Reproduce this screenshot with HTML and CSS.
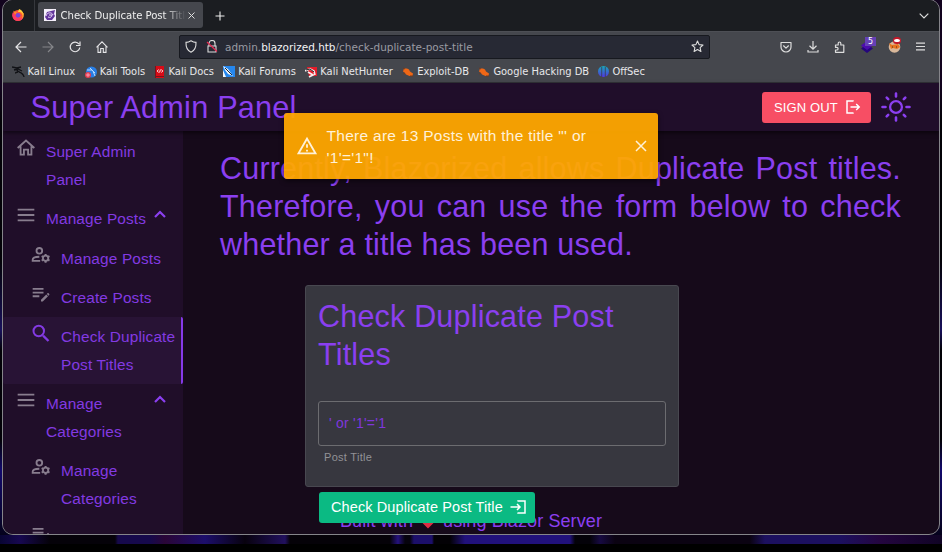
FILE: index.html
```html
<!DOCTYPE html>
<html lang="en">
<head>
<meta charset="utf-8">
<title>Check Duplicate Post Titles</title>
<link rel="stylesheet" href="styles.css">
</head>
<body>
<svg width="0" height="0" class="defs">
  <symbol id="bars" viewBox="0 0 24 24"><path d="M2 5.5h20M2 12h20M2 18.5h20" fill="none" stroke="currentColor" stroke-width="2.200"/></symbol>
  <symbol id="up" viewBox="0 0 24 24"><path d="m6 14.500 6-6 6 6" fill="none" stroke="currentColor" stroke-width="2.600"/></symbol>
  <symbol id="manage" viewBox="0 0 24 24"><g fill="none" stroke="currentColor" stroke-width="2.200"><circle cx="10" cy="7" r="3.400"/><path d="M11 19H2v-1.200c0-2 3.500-3.600 8-3.700"/><circle cx="17.500" cy="16" r="3.200"/></g><path d="M17.500 10.700v2.500M17.500 18.800v2.500M12.800 13.300l2.300 1.300M19.900 17.400l2.300 1.300M12.800 18.700l2.300-1.300M19.900 14.600l2.300-1.300" stroke="currentColor" stroke-width="2.400"/></symbol>
  <symbol id="note" viewBox="0 0 24 24"><path d="M2 9.200h13v2.200H2zm0-2.200h13V4.800H2zm0 8.800h8v-2.200H2zm17.010-3.930.71-.71c.39-.39 1.020-.39 1.410 0l.71.71c.39.39.39 1.020 0 1.410l-.71.71-2.120-2.120zm-.71.71-6.300 6.300V21h2.120l6.300-6.300-2.120-2.120z" fill="currentColor"/></symbol>
  <symbol id="bug" viewBox="0 0 12 10"><path d="M2 1.500h3l2 1 1 2 3 2-.5 2.500H7.500L4 7.500 3 6 1 4.500z" fill="#ef6716"/><path d="M1 1l2 1M1 7l2-1M11 9l-3 0" stroke="#71391f"/></symbol>
</svg>

<div class="window">
  <div class="tabstrip">
    <div class="pinned">
      <svg width="12" height="12" viewBox="0 0 12 12"><circle cx="6" cy="6.500" r="5.500" fill="#ff5535"/><path d="M7 0c3 1 5 4 4.700 7C11 3.500 8 3 6 3z" fill="#ffce3c"/><path d="M1 3C0 5-.200 8 2 10.500 5 13 10 12 11.300 8 9 10 4 10 3 6z" fill="#ff3768"/><path d="M8 3c3 2 3.500 5 1 7.500L11.500 8V4z" fill="#ffb52e"/><circle cx="6" cy="6.300" r="2.400" fill="#7c43dc"/><path d="M1 1.500L3 3l2 .5-2 2z" fill="#ff8b2b"/></svg>
    </div>
    <div class="tab">
      <svg width="12" height="12" viewBox="0 0 12 12"><path fill="#f4effa" d="M0 0h12v12H0z"/><path d="M3 3l8-2-1 4 1 2-3 4-5 0-2-3z" fill="#62359c"/><path d="M2 7c1-4 6-4 7-1M4 8c2 1 4 0 4-2H5" fill="none" stroke="#eadcf8" stroke-width="1"/></svg>
      <span class="tab-title">Check Duplicate Post Titles</span>
      <svg width="7" height="7" viewBox="0 0 7 7"><path d="M.5.5l6 6m0-6l-6 6" stroke="#ddd"/></svg>
    </div>
    <svg class="plus" width="10" height="10" viewBox="0 0 10 10"><path d="M5 .5v9M.5 5h9" stroke="#eee" stroke-width="1.100"/></svg>
    <svg class="tab-list" width="10" height="6" viewBox="0 0 10 6"><path d="M.7.7L5 5 9.300.7" fill="none" stroke="#ddd" stroke-width="1.200"/></svg>
  </div>

  <div class="toolbar">
    <div class="nav">
      <svg width="12" height="12" viewBox="0 0 12 12"><path d="M11.500 6H1m5-5L1 6l5 5" fill="none" stroke="#e6e6e8" stroke-width="1.200"/></svg>
      <svg width="12" height="12" viewBox="0 0 12 12"><path d="M.5 6H11M6 1l5 5-5 5" fill="none" stroke="#85868a" stroke-width="1.200"/></svg>
      <svg width="12" height="12" viewBox="0 0 12 12"><path d="M10 3.200A4.800 4.800 0 1 0 10.800 6.500M11 .5v4H7" fill="none" stroke="#e6e6e8" stroke-width="1.200"/></svg>
      <svg width="12" height="12" viewBox="0 0 12 12"><path d="M.5 6.300L6 .8l5.500 5.500M2 5v6.400h2.700V7.500h2.600v3.900H10V5" fill="none" stroke="#e6e6e8" stroke-width="1.100"/></svg>
    </div>
    <div class="urlbar">
      <svg width="12" height="13" viewBox="0 0 12 13"><path d="M6 .8c2 1.300 3.500 1.600 5 1.600C11.200 7 9.500 10.500 6 12.200 2.500 10.500.8 7 1 2.400 2.500 2.400 4 2.100 6 .8z" fill="none" stroke="#ddd" stroke-width="1.100"/></svg>
      <svg class="lock" width="12" height="13" viewBox="0 0 12 13"><path d="M3 6V3.500a3 3 0 0 1 6 0V6M2 6h8v6H2z" fill="none" stroke="#ddd" stroke-width="1.100"/><path d="M1 2l10 9.500" stroke="#e22850" stroke-width="1.300"/></svg>
      <span class="url">admin.<b>blazorized.htb</b>/check-duplicate-post-title</span>
      <svg class="star" width="13" height="13" viewBox="0 0 13 13"><path d="M6.500 1l1.600 3.600 3.900.4-2.900 2.600.8 3.900-3.400-2-3.400 2 .8-3.900L1 5l3.900-.4z" fill="none" stroke="#ddd" stroke-width="1.100" stroke-linejoin="round"/></svg>
    </div>
    <div class="addons">
      <svg width="12" height="12" viewBox="0 0 12 12"><path d="M1 1.500h10V6a5 5 0 0 1-10 0zM3.300 4.500L6 7.200l2.700-2.700" fill="none" stroke="#ddd" stroke-width="1.200" stroke-linejoin="round"/></svg>
      <svg width="12" height="12" viewBox="0 0 12 12"><path d="M6 0v8M2.500 4.800L6 8.200l3.500-3.400M1 9v2h10V9" fill="none" stroke="#ddd" stroke-width="1.200"/></svg>
      <svg width="12" height="12" viewBox="0 0 12 12"><path d="M1.500 4h2.700V2.300a1.300 1.300 0 0 1 2.600 0V4h3v7.300H1.500V9h1.300a1.200 1.200 0 0 0 0-2.600H1.500z" fill="none" stroke="#ddd" stroke-width="1.200" stroke-linejoin="round"/></svg>
      <span class="layers"><svg width="12" height="12" viewBox="0 0 12 12"><path d="M6 3l6 4.500L6 12 0 7.500z" fill="#25067c"/><path d="M6 0l6 4.500L6 9 0 4.500z" fill="#4c0cae"/></svg><span class="count">5</span></span>
      <span class="fox"><svg width="13" height="13" viewBox="0 0 13 13"><circle cx="6.500" cy="7" r="5.800" fill="#d8b79a"/><path d="M1 3l3 2 6-1 2 3-3 2-4-1-2 1z" fill="#e87320"/><path d="M4 7h1M8 7h1" stroke="#432"/></svg><span class="blocked"></span></span>
      <svg width="9" height="9" viewBox="0 0 9 9"><path d="M0 1.200h9M0 4.500h9M0 7.800h9" stroke="#ddd" stroke-width="1.200"/></svg>
    </div>
  </div>

  <div class="bookmarks">
    <span class="bm"><svg width="13" height="12" viewBox="0 0 13 12"><path d="M0 1l5 1 4-1M2 4l4-1 4 2M5 3c-1 4 6 2 7 8M6 6c-2 0-2 1-3 1" fill="none" stroke="#111216" stroke-width="1.300"/></svg>Kali Linux</span>
    <span class="bm"><svg width="12" height="12" viewBox="0 0 12 12"><circle cx="6.500" cy="6" r="5.500" fill="#287ee5"/><path d="M2 4l5 0 3 3M5 2l3 3 2 5" fill="none" stroke="#b9dcff"/><circle cx="3" cy="9" r="3" fill="#e53f50"/><path d="M2 8h2v2H2z" fill="none" stroke="#fbd" stroke-width=".7"/></svg>Kali Tools</span>
    <span class="bm"><svg width="11" height="12" viewBox="0 0 11 12"><path fill="#d70b17" d="M1 0h9v12H1z"/><path fill="#78131a" d="M1 0h1v12H1zM1 10h9v1H1z"/><path d="M4.500 3.500L3.300 5l1.200 1.500M7.500 3.500L8.700 5 7.500 6.500M6.400 3.500l-.8 3" fill="none" stroke="#fff" stroke-width=".9"/></svg>Kali Docs</span>
    <span class="bm"><svg width="12" height="11" viewBox="0 0 12 11"><path fill="#2587ee" d="M0 0h12v11H0z"/><path d="M0 0l5 3 5 7-5-2-3-4zM0 4l3 7H0z" fill="#f2f6fa"/><path d="M2 2l7 7" stroke="#152535"/></svg>Kali Forums</span>
    <span class="bm"><svg width="12" height="12" viewBox="0 0 12 12"><path fill="#e51c29" d="M2 1h10v9H4z"/><path d="M0 5l5-2 4 2 1 4M3 6l5 3-4 2" fill="none" stroke="#f3eded" stroke-width="1.700"/><path d="M1 4l4-1 4 3" fill="none" stroke="#222"/></svg>Kali NetHunter</span>
    <span class="bm"><svg width="12" height="10"><use href="#bug"/></svg>Exploit-DB</span>
    <span class="bm"><svg width="12" height="10"><use href="#bug"/></svg>Google Hacking DB</span>
    <span class="bm"><svg width="11" height="11" viewBox="0 0 11 11"><defs><linearGradient id="os" x2="0" y2="1"><stop stop-color="#18a7b8"/><stop offset="1" stop-color="#5137e1"/></linearGradient></defs><circle cx="5.500" cy="5.500" r="5.500" fill="url(#os)"/><path d="M3.700 1v10M7.300 1v10" stroke="#393c4c" stroke-width=".8"/></svg>OffSec</span>
  </div>

  <div class="page">
    <header class="appbar">
      <h1>Super Admin Panel</h1>
      <button class="signout">SIGN OUT
        <svg width="15" height="14" viewBox="0 0 15 14"><path d="M7 1.600V1H1v12h6v-.6M4.500 7H13M10.200 4l3 3-3 3" fill="none" stroke="#fff" stroke-width="1.500"/></svg>
      </button>
      <svg class="sun" width="30" height="30" viewBox="0 0 30 30"><g fill="none" stroke="#8b3ff0" stroke-width="2.600" stroke-linecap="round"><circle cx="15" cy="15" r="5.900" stroke-width="2.300"/><path d="M15 1.500v3M15 25.500v3M1.500 15h3M25.500 15h3M5.700 5.700l1.500 1.500M22.800 22.800l1.500 1.500M5.700 24.300l1.500-1.500M22.800 7.200l1.500-1.500"/></g></svg>
    </header>

    <div class="content">
      <nav class="drawer">
        <a class="item home"><svg width="22" height="22" viewBox="0 0 24 24"><path d="M2 12L12 3l10 9M5.500 10v10h4v-6h5v6h4V10" fill="none" stroke="currentColor" stroke-width="2.200"/></svg><span>Super Admin Panel</span></a>
        <a class="item"><svg width="20" height="20"><use href="#bars"/></svg><span>Manage Posts</span><svg class="chev" width="20" height="20"><use href="#up"/></svg></a>
        <a class="item sub"><svg width="20" height="20"><use href="#manage"/></svg><span>Manage Posts</span></a>
        <a class="item sub"><svg width="20" height="20"><use href="#note"/></svg><span>Create Posts</span></a>
        <a class="item sub active"><svg width="21" height="21" viewBox="0 0 24 24"><path d="M14.500 14.500L21 21" stroke="currentColor" stroke-width="2.800"/><circle cx="9.300" cy="9" r="6.300" fill="none" stroke="currentColor" stroke-width="2.400"/></svg><span>Check Duplicate Post Titles</span></a>
        <a class="item"><svg width="20" height="20"><use href="#bars"/></svg><span>Manage Categories</span><svg class="chev" width="20" height="20"><use href="#up"/></svg></a>
        <a class="item sub"><svg width="20" height="20"><use href="#manage"/></svg><span>Manage Categories</span></a>
        <a class="item sub"><svg width="20" height="20"><use href="#note"/></svg><span></span></a>
      </nav>

      <main>
        <p class="intro">Currently, Blazorized allows Duplicate Post titles. Therefore, you can use the form below to check whether a title has been used.</p>
        <section class="card">
          <h2>Check Duplicate Post Titles</h2>
          <div class="field">' or '1'='1</div>
          <div class="helper">Post Title</div>
        </section>
        <button class="check">Check Duplicate Post Title
          <svg width="16" height="14" viewBox="0 0 16 14"><path d="M8 1.600V1h7v12H8v-.6M.5 7H10M7 4l3 3-3 3" fill="none" stroke="#fff" stroke-width="1.500"/></svg>
        </button>
        <footer>Built with <svg width="16" height="15" viewBox="0 0 16 15"><path d="M8 14.500L1.500 8C-3 1 6-2 8 3c2-5 11-2 6.500 5z" fill="#dd2e44"/></svg> using Blazor Server</footer>
      </main>
    </div>

    <div class="toast">
      <svg width="22" height="22" viewBox="0 0 24 24"><path d="M12 5.990 19.530 19H4.470L12 5.990M12 2 1 21h22L12 2zm1 14h-2v2h2v-2zm0-6h-2v4h2v-4z" fill="currentColor"/></svg>
      <span>There are 13 Posts with the title "' or '1'='1"!</span>
      <svg class="close" width="12" height="12" viewBox="0 0 12 12"><path d="M1 1l10 10M11 1L1 11" stroke="currentColor" stroke-width="1.500"/></svg>
    </div>
  </div>
</div>
<div class="wallpaper"></div>
</body>
</html>
```

FILE: styles.css
```css
* { box-sizing: border-box; }
body { margin: 0; height: 552px; overflow: hidden; font-family: "Liberation Sans", Arial, sans-serif; background: linear-gradient(#12031e 0 85px, #030207 120px 260px, #18105a 330px, #020107 350px 440px, #12096c 470px, #05021c 535px, #000 544px); }
svg { display: block; flex: none; }
.defs { position: absolute; }
h1, h2, p { margin: 0; font-weight: 400; }
button { border: 0; font-family: inherit; color: #fff; display: flex; align-items: center; white-space: nowrap; }

.window { height: 536px; margin: -1px 2px 0; border: 1px solid #85858a; border-radius: 11px; overflow: hidden; background: #160a1a; position: relative; }
.wallpaper { height: 17px; background: linear-gradient(transparent 9px, #000 9px), linear-gradient(90deg, #090533 0, #170850 20px, #050209 50px 115px, #16094b 118px 150px, #2a0637 165px, #1c0e6b 205px, #08020e 245px, #21105e 285px, #050208 290px 390px, #25127d 398px, #06030d 405px 410px, #1c0f6a 414px 432px, #030105 434px 450px, #21117b 465px 570px, #040209 575px 590px, #170a42 600px, #0b0312 615px 750px, #1c105f 765px 840px, #240640 880px, #100425 942px); }

.tabstrip { height: 31px; background: #1b1d21; display: flex; align-items: center; font: 10.150px "DejaVu Sans", sans-serif; color: #eee; }
.pinned { width: 32px; height: 31px; border-right: 1px solid #36383d; padding: 9px 0 0 9px; }
.tab { width: 165px; height: 26px; margin: -1px 0 0 3px; border-radius: 3px; background: #45474d; display: flex; align-items: center; padding: 0 8px 0 6px; }
.tab-title { flex: 1; margin: 0 2px 0 4.500px; overflow: hidden; white-space: nowrap; letter-spacing: -.05px; -webkit-mask-image: linear-gradient(90deg, #000 82%, transparent); mask-image: linear-gradient(90deg, #000 82%, transparent); }
.plus { margin-left: 12px; }
.tab-list { margin: 0 10px 0 auto; }

.toolbar { height: 31px; background: #45474d; display: flex; align-items: center; border-top: 1px solid #4d4f55; }
.nav { display: flex; gap: 15px; width: 176px; padding-left: 12px; }
.urlbar { width: 531px; height: 24px; background: #272934; border: 1px solid #17191f; border-radius: 2px; display: flex; align-items: center; padding: 0 5px; margin-top: -1px; }
.lock { margin-left: 9px; }
.url { font: 10.470px "DejaVu Sans", sans-serif; color: #9a9ba3; margin-left: 7px; white-space: nowrap; }
.url b { font-weight: 400; color: #f4f4f5; }
.star { margin-left: auto; }
.addons { display: flex; align-items: center; gap: 15px; margin: -1px 0 0 70px; }
.layers, .fox { position: relative; }
.count { position: absolute; left: 4px; top: -4px; width: 11px; height: 9px; background: #6540b6; color: #fff; font: 8px/9px "DejaVu Sans", sans-serif; text-align: center; }
.blocked { position: absolute; left: 5px; top: -3px; width: 8px; height: 7px; border-radius: 4px; border: solid #c31829; border-width: 2.5px 1px; background: #fff; }

.bookmarks { height: 21px; background: #45474d; display: flex; gap: 9.400px; align-items: center; font: 9.920px "DejaVu Sans", sans-serif; color: #e8e8ea; white-space: nowrap; border-bottom: 1px solid #303137; padding: 0 0 1px 8.500px; }
.bm { display: flex; align-items: center; gap: 3px; height: 20px; }

.page { height: 451px; position: relative; color: #8b3ff0; }
.appbar { height: 48px; background: #200e2a; display: flex; align-items: center; padding: 0 28px 0 27.500px; box-shadow: 0 2px 4px #0008; position: relative; z-index: 1; }
h1, h2, .intro { font-size: 30.500px; line-height: 38px; letter-spacing: .2px; }
h1 { font-size: 30.700px; padding-top: 2px; }
.signout { margin-left: auto; width: 109px; height: 31px; border-radius: 3px; background: #f74e64; font-size: 13px; letter-spacing: .12px; padding: 0 0 0 12px; gap: 8px; }
.sun { margin-left: 10px; }

.content { display: flex; height: 403px; }
.drawer { width: 180px; flex: none; background: #200e29; padding-top: 1px; overflow: hidden; }
.item { display: flex; align-items: flex-start; padding: 6px 0 6px 13px; font-size: 15.400px; line-height: 27.500px; letter-spacing: .145px; color: #833ae2; }
.item > svg { color: #887d8e; width: 20px; margin-top: 0; }
.item > span { margin-left: 10px; width: 105px; }
.item .chev { color: #8b3ff0; margin-left: -1px; }
.home > svg { margin-top: -1px; }
.sub { padding-left: 28px; }
.sub > span { width: 119px; margin-left: 10px; }
.active { background: #281335; border-right: 2px solid #8639e8; border-radius: 2px; margin-top: -.5px; }
.active > svg { color: #833ae2; }

main { flex: 1; position: relative; padding: 18px 38px 0 37px; }
.intro { text-align: justify; }
.card { width: 374px; height: 202px; margin: 22px 0 0 85px; padding: 11px 12px; border: 1px solid #484850; border-radius: 3px; background: #37373f; }
.field { height: 45px; margin-top: 28px; border: 1px solid #6c6c70; border-radius: 3px; padding: 0 10px; font-size: 14px; line-height: 43px; letter-spacing: .23px; color: #7f36dc; }
.helper { font-size: 11px; line-height: 14px; letter-spacing: .3px; color: #929296; margin: 4px 0 0 6px; }
.check { position: relative; z-index: 1; width: 216px; height: 31px; margin: 5px 0 0 99px; padding: 0 0 1px 12px; gap: 7px; border-radius: 3px; background: #0bba83; font-size: 14.500px; letter-spacing: .1px; }
footer { position: absolute; left: 157px; top: 378px; display: flex; align-items: center; gap: 7px; font-size: 18px; line-height: 24px; letter-spacing: .1px; white-space: nowrap; }

.toast { position: absolute; z-index: 2; left: 281px; top: 30px; width: 374px; height: 66px; border-radius: 3px; background: #ffa800f2; color: #fff1d8; display: flex; align-items: center; padding: 0 11px 0 12px; font-size: 15.500px; line-height: 22.500px; letter-spacing: .28px; box-shadow: 0 2px 5px #0008; }
.toast span { margin-left: 8.500px; padding-top: 2px; width: 285px; }
.close { margin-left: auto; }
```
